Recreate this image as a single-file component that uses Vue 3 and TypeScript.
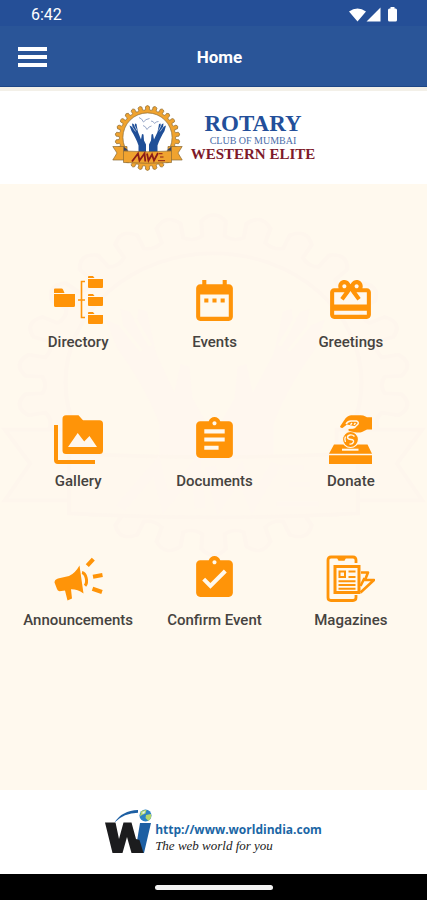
<script setup lang="ts">
interface Tile {
  id: string
  label: string
}

const tiles: Tile[] = [
  { id: 'directory', label: 'Directory' },
  { id: 'events', label: 'Events' },
  { id: 'greetings', label: 'Greetings' },
  { id: 'gallery', label: 'Gallery' },
  { id: 'documents', label: 'Documents' },
  { id: 'donate', label: 'Donate' },
  { id: 'announcements', label: 'Announcements' },
  { id: 'confirm', label: 'Confirm Event' },
  { id: 'magazines', label: 'Magazines' },
]

// Outline of the cog wheel around the club emblem.
function cogPath(cx: number, cy: number, outer: number, root: number, teeth: number): string {
  const step = (Math.PI * 2) / teeth
  const at = (r: number, a: number) => `${(cx + r * Math.sin(a)).toFixed(2)} ${(cy - r * Math.cos(a)).toFixed(2)}`
  const parts: string[] = []
  for (let i = 0; i < teeth; i++) {
    const a = i * step
    parts.push(`${i === 0 ? 'M' : 'L'}${at(root, a - step * 0.27)}`)
    parts.push(`L${at(outer - 1.2, a - step * 0.27)}`)
    parts.push(`Q${at(outer + 1.2, a)} ${at(outer - 1.2, a + step * 0.27)}`)
    parts.push(`L${at(root, a + step * 0.27)}`)
    parts.push(`Q${at(root - 1, a + step * 0.5)} ${at(root, a + step * 0.73)}`)
  }
  return parts.join('') + 'Z'
}

const cog = cogPath(35.5, 33, 32.5, 28.5, 26)
</script>

<template>
  <div class="page">
    <svg class="defs" aria-hidden="true">
      <symbol id="seal" viewBox="0 0 71 66" preserveAspectRatio="none">
        <path class="gear" :d="cog" />
        <circle class="disc" cx="35.5" cy="32.5" r="24.6" />
        <g class="birds">
          <path d="M27 12.5q3 1 4.500 4.500q2-3 6-3.500" />
          <path d="M39 16q2.500 0 3.500 2.500q1.500-2 4-2" />
          <path d="M31 20.500q2.500.500 4 4q1.500-3 4.500-3.500" />
        </g>
        <path class="hands" d="M17.500 20.500l3 1.500-.500-3.500 1.500.500 1.200 2 .300-2.500 1.500.500.500 3 1 5 3 7.500 1-5.500 1.500.500.500 6 2 4V50H26.500V40.500C25 35.500 22 30 19.500 26Z" />
        <path class="hands" d="M54 20.500l-3 1.500.500-3.500-1.500.500-1.200 2-.300-2.500-1.500.500-.500 3-1 5-3.500 7.500-1-5.500-1.500.500-.500 6-2 4V50H45.500V40.500C47 35.500 50 30 52.500 26Z" />
        <path class="fingers" d="M20 21.500l3.500 5M22.500 20.500l2.500 5M51.500 21.500l-3.500 5M49 20.500l-2.500 5M35.800 38v11" />
        <path class="ribbon" d="M.8 41.500H15v13.500H.8L5 48ZM70.200 41.500H56v13.500h14.200L66 48Z" />
        <path class="fold" d="M11.500 46l5-.500-5-4ZM59.500 46l-5-.500 5-4Z" />
        <path class="ribbon" d="M11.500 46q24 1.500 48 0v11.500q-24 1.500-48 0Z" />
        <path class="mark" d="M20 56.500l6-8 1.500 7 5-7 .800 8M35 48.500l1.500 7 3.500-6 2 6 4-7.500" />
        <path class="mark small" d="M47 48.700h3.500M48 52h3.500M46 55.700h7" />
      </symbol>
    </svg>

    <div class="status">
      <span>6:42</span>
      <svg width="50" height="16" viewBox="0 0 50 16" aria-hidden="true">
        <path fill="#fff" d="M0 4.500Q8.500-1.500 17 4.500L8.500 14.500ZM17.500 14.500H31.500V.500ZM39 3q0-1.500 1.500-1.500h1V0h4v1.500h1Q48 1.500 48 3v10q0 1.500-1.500 1.500h-6Q39 14.500 39 13Z" />
      </svg>
    </div>

    <header class="appbar">
      <button class="menu" type="button" aria-label="Menu">
        <span></span><span></span><span></span>
      </button>
      <h1>Home</h1>
    </header>

    <section class="club">
      <svg class="club-seal" width="71" height="66" aria-hidden="true"><use href="#seal" /></svg>
      <div class="club-name">
        <span class="rotary">ROTARY</span>
        <span class="club-of">CLUB OF MUMBAI</span>
        <span class="elite">WESTERN ELITE</span>
      </div>
    </section>

    <main class="main">
      <svg class="watermark" aria-hidden="true"><use href="#seal" /></svg>
      <nav class="grid">
        <a v-for="tile in tiles" :key="tile.id" class="tile" :href="'#' + tile.id">
          <svg v-if="tile.id === 'directory'" class="icon" viewBox="0 0 49 49">
            <path d="M0 13.500q0-1 1-1h6.500q1 0 1.500 1l1.500 3.500H0ZM0 18h21v11.500q0 1.500-1.500 1.500h-18Q0 31 0 29.500Z" />
            <path d="M34 .8Q34 0 35 0h4l1.500 2H34ZM34 3h15v8q0 1-1 1H35q-1 0-1-1ZM34 18.800q0-.8 1-.8h4l1.500 2H34ZM34 21h15v8q0 1-1 1H35q-1 0-1-1ZM34 36.800q0-.8 1-.8h4l1.500 2H34ZM34 39h15v8q0 1-1 1H35q-1 0-1-1Z" />
            <path class="line" stroke-width="1.600" d="M31 5.500h-3.500v36H31M24 24h7" />
          </svg>
          <svg v-else-if="tile.id === 'events'" class="icon" viewBox="0 0 24 24">
            <path d="M9 11H7v2h2v-2zm4 0h-2v2h2v-2zm4 0h-2v2h2v-2zm2-7h-1V2h-2v2H8V2H6v2H5c-1.110 0-1.990.9-1.990 2L3 20c0 1.100.89 2 2 2h14c1.100 0 2-.9 2-2V6c0-1.100-.9-2-2-2zm0 16H5V9h14v11z" />
          </svg>
          <svg v-else-if="tile.id === 'greetings'" class="icon" viewBox="0 0 24 24">
            <path d="M20 6h-2.180c.11-.31.18-.65.18-1 0-1.660-1.340-3-3-3-1.050 0-1.960.54-2.500 1.350l-.5.67-.5-.68C10.960 2.540 10.050 2 9 2 7.340 2 6 3.340 6 5c0 .35.07.69.18 1H4c-1.110 0-1.990.89-1.990 2L2 19c0 1.110.89 2 2 2h16c1.110 0 2-.89 2-2V8c0-1.110-.89-2-2-2zm-5-2c.55 0 1 .45 1 1s-.45 1-1 1-1-.45-1-1 .45-1 1-1zM9 4c.55 0 1 .45 1 1s-.45 1-1 1-1-.45-1-1 .45-1 1-1zm11 15H4v-2h16v2zm0-5H4V8h5.080L7 10.830 8.620 12 11 8.760l1-1.360 1 1.360L15.380 12 17 10.830 14.920 8H20v6z" />
          </svg>
          <svg v-else-if="tile.id === 'gallery'" class="icon" viewBox="0 0 49 49">
            <path d="M0 10h4v35h37v4H4q-4 0-4-4Z" />
            <path fill-rule="evenodd" d="M12 .3h12.500l4.500 5H45.500q3.500 0 3.500 3.700v26.500q0 3.500-3.500 3.500H12q-3.500 0-3.500-3.500V4Q8.500.3 12 .3ZM14 32h29l-7.500-11-5.300 5.500L23.700 18Z" />
          </svg>
          <svg v-else-if="tile.id === 'documents'" class="icon" viewBox="0 0 24 24">
            <path d="M19 3h-4.180C14.400 1.840 13.300 1 12 1c-1.300 0-2.400.84-2.820 2H5c-1.100 0-2 .9-2 2v14c0 1.100.9 2 2 2h14c1.100 0 2-.9 2-2V5c0-1.100-.9-2-2-2zm-7 0c.55 0 1 .45 1 1s-.45 1-1 1-1-.45-1-1 .45-1 1-1zm2 14H7v-2h7v2zm3-4H7v-2h10v2zm0-4H7V7h10v2z" />
          </svg>
          <svg v-else-if="tile.id === 'donate'" class="icon" viewBox="0 0 49 49">
            <path d="M8 29.500H41.500L46 38.800H3ZM3 40.300H46V49H3Z" />
            <path class="cut" d="M16 34.700h16.500" />
            <circle class="coin" cx="24.500" cy="24.500" r="8" />
            <path class="cut thin" d="M28.500 21.500q-2-2-4.500-1.500t-2.500 2.500q.5 1.800 3.500 2t2.500 2.500q-1 2.500-4 2M19.500 27q-1.500-2.500 0-5.500" />
            <path d="M14 11.500l4-6Q21 .5 25 .3h9.500q3 0 5 1.200l1.500.8h5v12.200H41l-5 2.500q-3 1-7 .2l-6-1.200q-1.500-1.500.5-2.500l5.500-.5 1-1.500-9-2-4.500 3.500q-2 0-2.500-1.500Z" />
            <path class="cut thin" d="M20 9q2-3 5-3h5.500q2.500 1 1.500 3l-3.500 3.500q-3 1-6 .5M24.500 9.800l1.500-1.800M28 9.800l1.500-1.800" />
          </svg>
          <svg v-else-if="tile.id === 'announcements'" class="icon" viewBox="0 0 49 49">
            <path d="M4 24.500L15 22Q21 19.500 25.500 11.500L29.500 39.500Q23 35 17 35.300L18 44.500l-4.500 2L11 36.500l-5.500.8Q3.500 37 3 35L.5 28.500Q.5 25.500 4 24.500Z" />
            <path class="line" stroke-width="3" d="M28 18.500q3 .5 4.200 5.500t-1.200 7.800" />
            <path class="line" stroke-width="4.200" d="M33.300 11.700l6-6.500M39 22.700l9.500-1.700M38.500 34.700l9.500 3.300" />
          </svg>
          <svg v-else-if="tile.id === 'confirm'" class="icon" viewBox="0 0 24 24">
            <path d="M19 3h-4.180C14.400 1.840 13.300 1 12 1c-1.300 0-2.400.84-2.820 2H5c-1.100 0-2 .9-2 2v14c0 1.100.9 2 2 2h14c1.100 0 2-.9 2-2V5c0-1.100-.9-2-2-2zm-7 0c.55 0 1 .45 1 1s-.45 1-1 1-1-.45-1-1 .45-1 1-1zm-2 14l-4-4 1.410-1.410L10 14.170l6.590-6.590L18 9l-8 8z" />
          </svg>
          <svg v-else class="icon" viewBox="0 0 49 49">
            <path class="line" stroke-width="2.800" d="M30 9V6q0-3-3-3H5Q2 3 2 6V43.500q0 3 3 3H27q3 0 3-3V41" />
            <path d="M10.500 3h10l-2 3.800h-6Z" />
            <path class="line" stroke-width="2.600" stroke-linejoin="round" d="M35 18.500h7L39 26h9L34.500 38.500M34.500 32l4-8" />
            <path class="line paper" stroke-width="3" d="M9 12.500H33V38.500H9Z" />
            <path class="line" stroke-width="2" d="M13.500 17.500h5.500v5.500h-5.500ZM22.500 17.500h7M22.500 23h7M12.500 27.300h17M12.500 31h17M12.500 34.700h17" />
          </svg>
          <span>{{ tile.label }}</span>
        </a>
      </nav>
    </main>

    <footer class="footer">
      <svg width="47" height="46" viewBox="0 0 47 46" aria-hidden="true">
        <path fill="#1d5fa3" d="M9.500 13.500Q17 1.500 33 1v2.800Q19 4 9.500 13.500ZM35 14h11L39 44h-9Z" />
        <path fill="#1c1c1e" d="M0 13.500H10.500L14 30l4.500-16.500h8L31 30l3.500 1L38.500 44H26.500L22 28l-4.500 16H7.500Z" />
        <circle cx="40.500" cy="6.500" r="6" fill="#2c82c4" />
        <path fill="#b4d66b" d="M36 2.500q3-2 5.500-1.500l-1 3.500-3.500 1.500-2 1.500ZM41 6l5-1q1 4-2.500 7L40.500 9Z" />
        <path fill="#e4f3fb" d="M37.500 3l2.500-1-.5 2-2 1Z" />
      </svg>
      <div class="brand">
        <a href="http://www.worldindia.com">http://www.worldindia.com</a>
        <em>The web world for you</em>
      </div>
    </footer>

    <div class="gesture"><span></span></div>
  </div>
</template>

<style>
body {
  margin: 0;
}
</style>

<style scoped>
.page {
  display: flex;
  flex-direction: column;
  min-height: 100vh;
  background: #fff;
  font-family: Roboto, "Liberation Sans", sans-serif;
}

.defs {
  position: absolute;
  width: 0;
  height: 0;
}

.status {
  display: flex;
  align-items: center;
  justify-content: space-between;
  height: 26px;
  padding: 4px 28px 0 31px;
  box-sizing: border-box;
  background: #254f97;
  color: #fff;
  font-size: 16px;
  line-height: 22px;
}

.appbar {
  display: grid;
  grid-template-columns: 1fr auto 1fr;
  align-items: center;
  height: 61px;
  padding: 2px 6px 0 18px;
  box-sizing: border-box;
  border-bottom: 1px solid #1d4686;
  background: #2a5598;
}

.menu {
  display: flex;
  flex-direction: column;
  gap: 4px;
  width: 29px;
  padding: 0;
  border: 0;
  background: none;
}

.menu span {
  height: 4px;
  background: #fff;
}

h1 {
  margin: 0;
  color: #fff;
  font-size: 17px;
  font-weight: 700;
  line-height: 24px;
}

.club {
  display: flex;
  align-items: center;
  justify-content: center;
  gap: 8px;
  height: 97px;
  box-sizing: border-box;
  border-top: 4px solid #f3f0e8;
}

.club-seal {
  --gear: #f0a32f;
  --edge: #8a6a35;
  --disc: #fff;
  --blue: #1f4f98;
  --fold: #38415c;
  --mark: #8c1d18;
  --bird: #9aa9c9;
}

.watermark {
  --gear: #fff8ee;
  --edge: #fef6ed;
  --disc: #fff9ee;
  --blue: #fff7ef;
  --fold: #fef6ed;
  --mark: #fff7ef;
  --bird: #fff9ee;
  position: absolute;
  top: 28px;
  left: 0;
  width: 100%;
  height: 346px;
}

.gear,
.ribbon {
  fill: var(--gear);
  stroke: var(--edge);
  stroke-width: 0.7;
}

.disc {
  fill: var(--disc);
  stroke: var(--edge);
  stroke-width: 0.7;
}

.hands {
  fill: var(--blue);
}

.fingers {
  fill: none;
  stroke: var(--disc);
  stroke-width: 0.6;
}

.birds {
  fill: none;
  stroke: var(--bird);
  stroke-width: 1;
}

.fold {
  fill: var(--fold);
}

.mark {
  fill: none;
  stroke: var(--mark);
  stroke-width: 1.8;
}

.mark.small {
  stroke-width: 1;
}

.club-name {
  display: flex;
  flex-direction: column;
  align-items: center;
  font-family: "Liberation Serif", serif;
}

.rotary {
  color: #234f9a;
  font-size: 23px;
  font-weight: 700;
  line-height: 22px;
}

.club-of {
  color: #4a6ca8;
  font-size: 10px;
  line-height: 11px;
}

.elite {
  color: #7e1a2a;
  font-size: 15px;
  font-weight: 700;
  line-height: 16px;
}

.main {
  position: relative;
  flex: 1;
  padding: 92px 8px 92px 10px;
  background: #fff9ee;
}

.grid {
  position: relative;
  display: grid;
  grid-template-columns: repeat(3, 1fr);
  row-gap: 63px;
}

.tile {
  display: flex;
  flex-direction: column;
  align-items: center;
  gap: 7px;
  color: #464340;
  font-size: 15px;
  font-weight: 500;
  line-height: 20px;
  text-decoration: none;
  white-space: nowrap;
}

.icon {
  width: 49px;
  height: 49px;
  fill: #ff9408;
}

.line {
  fill: none;
  stroke: #ff9408;
}

.paper {
  fill: #fff9ee;
}

.cut {
  fill: none;
  stroke: #fff9ee;
  stroke-width: 2;
}

.cut.thin {
  stroke-width: 1.4;
}

.coin {
  stroke: #fff9ee;
  stroke-width: 1.2;
}

.footer {
  display: flex;
  align-items: center;
  justify-content: center;
  gap: 3px;
  height: 84px;
}

.brand {
  display: flex;
  flex-direction: column;
  padding-top: 12px;
}

.brand a {
  color: #1b66a5;
  font-family: "Open Sans", sans-serif;
  font-size: 12px;
  font-weight: 700;
  line-height: 16px;
  text-decoration: none;
}

.brand em {
  color: #222;
  font-family: "Liberation Serif", serif;
  font-size: 13px;
  line-height: 16px;
}

.gesture {
  display: flex;
  align-items: center;
  justify-content: center;
  height: 26px;
  background: #000;
}

.gesture span {
  width: 118px;
  height: 5px;
  border-radius: 3px;
  background: #f2f2f2;
}
</style>
